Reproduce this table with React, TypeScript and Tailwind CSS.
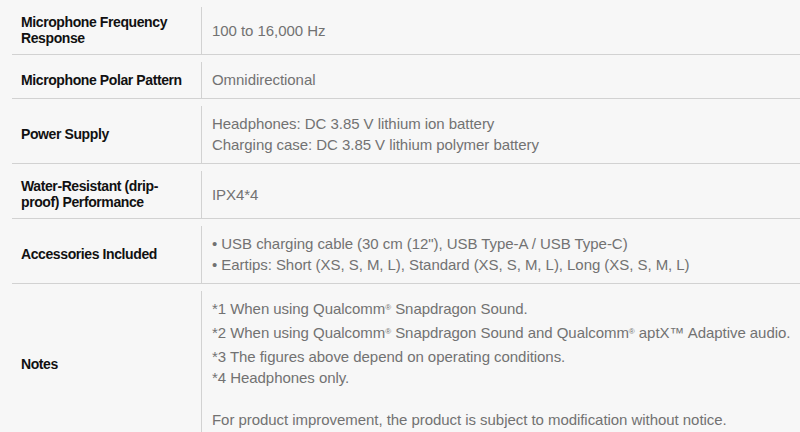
const R = () => <span className="relative -top-[4px] text-[8px]">®</span>;

const rows: { label: React.ReactNode; value: React.ReactNode }[] = [
  {
    label: (
      <>
        Microphone Frequency
        <br />
        Response
      </>
    ),
    value: <p>100 to 16,000 Hz</p>,
  },
  { label: "Microphone Polar Pattern", value: <p>Omnidirectional</p> },
  {
    label: "Power Supply",
    value: (
      <>
        <p>Headphones: DC 3.85 V lithium ion battery</p>
        <p>Charging case: DC 3.85 V lithium polymer battery</p>
      </>
    ),
  },
  {
    label: (
      <>
        Water-Resistant (drip-
        <br />
        proof) Performance
      </>
    ),
    value: <p>IPX4*4</p>,
  },
  {
    label: "Accessories Included",
    value: (
      <>
        <p>• USB charging cable (30 cm (12"), USB Type-A / USB Type-C)</p>
        <p>• Eartips: Short (XS, S, M, L), Standard (XS, S, M, L), Long (XS, S, M, L)</p>
      </>
    ),
  },
  {
    label: "Notes",
    value: (
      <>
        <p>
          *1 When using Qualcomm<R /> Snapdragon Sound.
        </p>
        <p>
          *2 When using Qualcomm<R /> Snapdragon Sound and Qualcomm<R /> aptX™ Adaptive audio.
        </p>
        <p>*3 The figures above depend on operating conditions.</p>
        <p>*4 Headphones only.</p>
        <p>&nbsp;</p>
        <p>For product improvement, the product is subject to modification without notice.</p>
      </>
    ),
  },
];

export default function App() {
  return (
    <div className="min-h-[432px] w-[800px] bg-[#f7f7f7] pl-3 font-['Liberation_Sans',Arial,sans-serif]">
      {rows.map((row, i) => (
        <div key={i} className="flex border-b border-[#d2d2d2] pt-[7px]">
          <div className="flex w-[189px] shrink-0 items-center pt-[7px] pb-[8px] pl-[9px] text-[14px] font-bold leading-4 tracking-[-0.4px] text-[#111]">
            <div>{row.label}</div>
          </div>
          <div className="flex flex-1 flex-col justify-center border-l border-[#d2d2d2] pt-[7px] pb-[8px] pl-[10px] text-[15px] leading-[21px] tracking-[-0.05px] text-[#727272]">
            {row.value}
          </div>
        </div>
      ))}
    </div>
  );
}
